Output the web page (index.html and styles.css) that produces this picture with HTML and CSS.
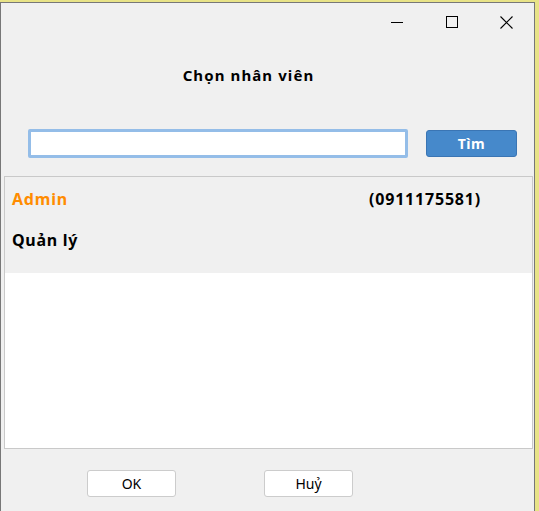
FILE: index.html
```html
<!DOCTYPE html>
<html lang="vi">
<head>
<meta charset="utf-8">
<title>Chọn nhân viên</title>
<link rel="stylesheet" href="styles.css">
</head>
<body>
<div class="window">
  <div class="titlebar">
    <div class="ctrl">
      <svg width="12" height="12" viewBox="0 0 12 12"><path d="M0 6.5H12" stroke="#000" stroke-width="1"/></svg>
    </div>
    <div class="ctrl">
      <svg width="12" height="12" viewBox="0 0 12 12"><rect x="0.5" y="0.5" width="11" height="11" fill="none" stroke="#000" stroke-width="1"/></svg>
    </div>
    <div class="ctrl">
      <svg width="13" height="13" viewBox="0 0 13 13"><path d="M0.5 0.5L12.5 12.5M12.5 0.5L0.5 12.5" stroke="#000" stroke-width="1.1"/></svg>
    </div>
  </div>
  <div class="heading">Chọn nhân viên</div>
  <div class="search-row">
    <input class="search-input" type="text">
    <button class="btn-find">Tìm</button>
  </div>
  <div class="list">
    <div class="item">
      <div class="item-top">
        <span class="name">Admin</span>
        <span class="phone">(0911175581)</span>
      </div>
      <div class="role">Quản lý</div>
    </div>
  </div>
  <div class="actions">
    <button class="btn">OK</button>
    <button class="btn">Huỷ</button>
  </div>
</div>
</body>
</html>
```
FILE: styles.css
```css
html, body {
  margin: 0;
  padding: 0;
}
body {
  background: #e8e387;
  height: 511px;
  overflow: hidden;
  font-family: "Noto Sans", "Open Sans", sans-serif;
}
.window {
  margin-top: 2px;
  width: 533px;
  height: 520px;
  background: #f0f0f0;
  border: 1px solid #777777;
  border-bottom: none;
}
.titlebar {
  height: 38px;
  display: flex;
  justify-content: flex-end;
}
.ctrl {
  width: 55px;
  display: flex;
  align-items: center;
  justify-content: center;
}
.heading {
  margin-top: 24px;
  padding-right: 38px;
  text-align: center;
  font-size: 15px;
  line-height: 20px;
  font-weight: 700;
  letter-spacing: 1.1px;
  color: #000;
}
.search-row {
  margin-top: 44px;
  display: flex;
  align-items: center;
  padding-left: 27px;
}
.search-input {
  box-sizing: border-box;
  width: 380px;
  height: 29px;
  margin: 0;
  border: 3px solid #94bde8;
  border-radius: 2px;
  background: #fff;
  outline: none;
}
.btn-find {
  box-sizing: border-box;
  margin-left: 18px;
  width: 91px;
  height: 27px;
  background: #4689cb;
  border: 1px solid #3a75b4;
  border-radius: 3px;
  color: #fff;
  font-family: "Noto Sans", sans-serif;
  font-weight: 700;
  font-size: 14px;
  letter-spacing: 0.6px;
  padding: 0;
}
.list {
  box-sizing: border-box;
  margin-top: 18px;
  margin-left: 3px;
  width: 529px;
  height: 273px;
  background: #fff;
  border: 1px solid #c9c9c9;
}
.item {
  background: #f0f0f0;
  padding: 11px 51px 22px 7px;
}
.item-top {
  display: flex;
  justify-content: space-between;
  font-size: 16px;
  line-height: 22px;
  font-weight: 700;
  letter-spacing: 0.8px;
}
.name {
  color: #ff8c00;
}
.phone {
  color: #000;
}
.role {
  margin-top: 19px;
  font-size: 16px;
  line-height: 22px;
  font-weight: 700;
  letter-spacing: 0.7px;
  color: #000;
}
.actions {
  margin-top: 21px;
  padding-left: 86px;
  display: flex;
  gap: 88px;
}
.btn {
  box-sizing: border-box;
  width: 89px;
  height: 27px;
  background: #fff;
  border: 1px solid #cccccc;
  border-radius: 3px;
  font-family: "Noto Sans", sans-serif;
  font-size: 14px;
  color: #000;
  padding: 0;
}
```
